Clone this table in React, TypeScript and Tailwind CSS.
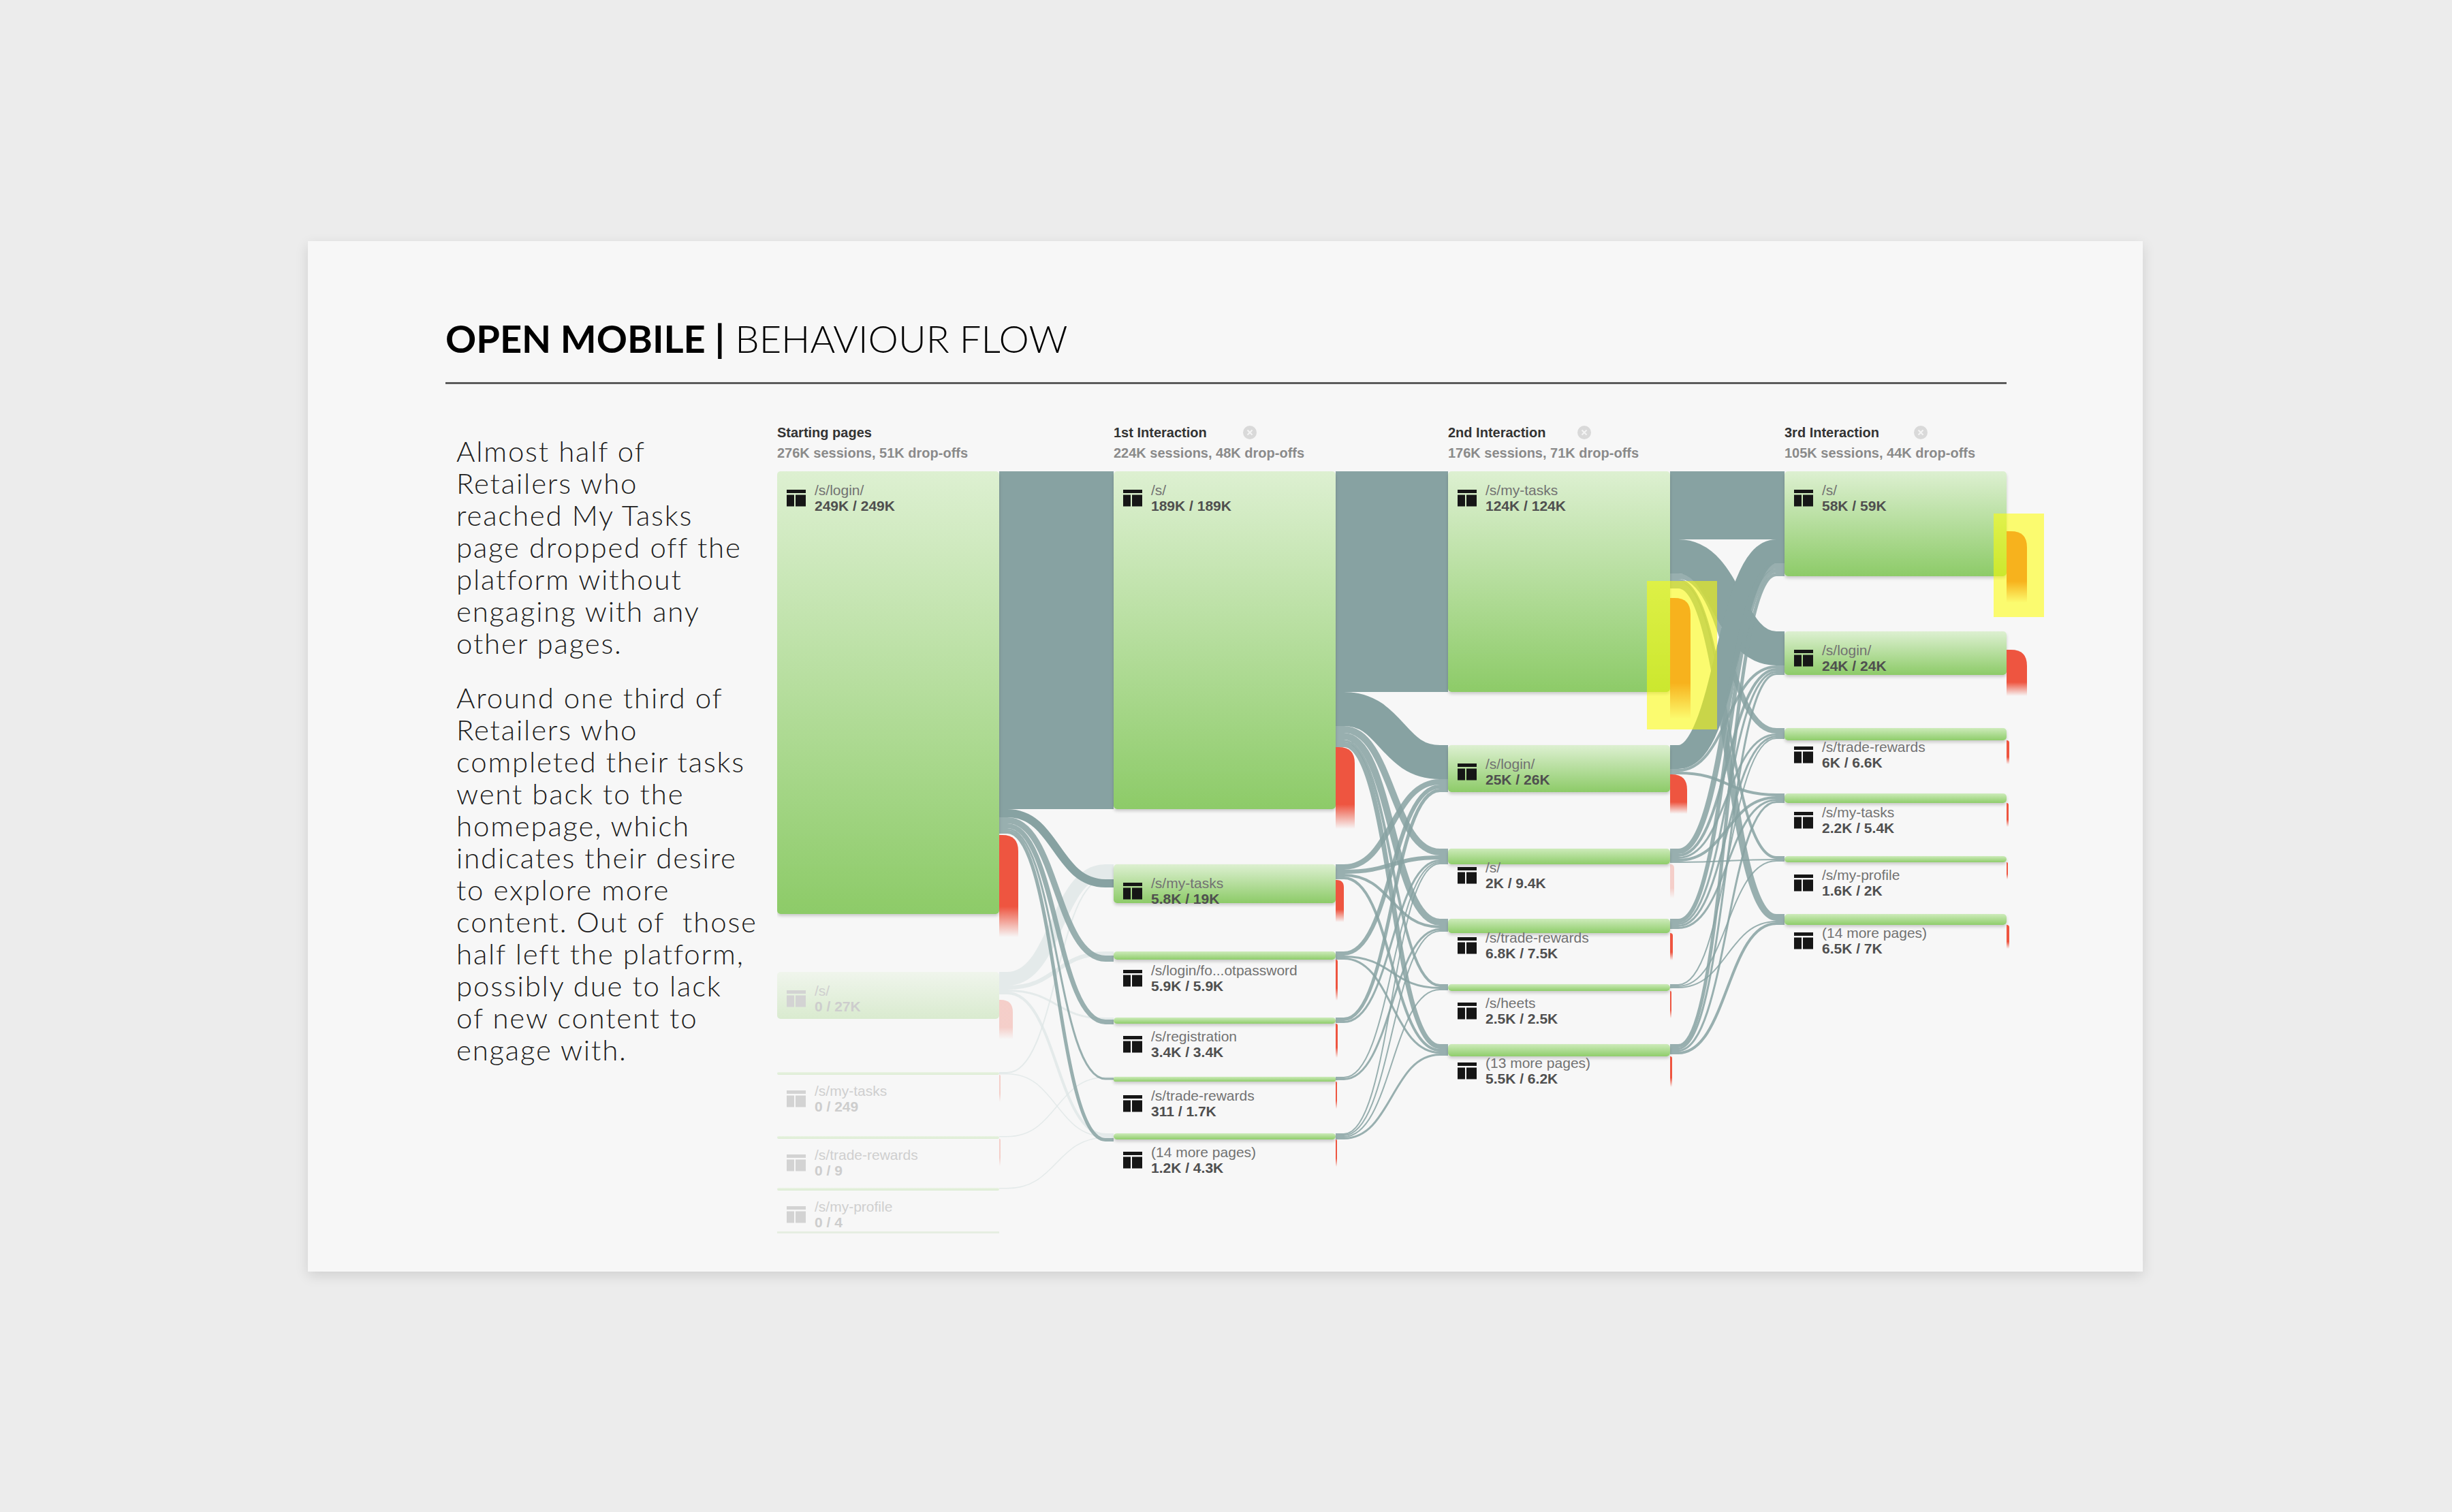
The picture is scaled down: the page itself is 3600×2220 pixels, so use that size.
import React from "react";

type FlowNode = {
  id: string;
  col: number;
  y: number;
  h: number;
  name: string;
  value: string;
  faded?: boolean;
};
type FlowLink = { s: string; t: string; w: number; faded?: boolean };
type Drop = { id: string; y: number; h: number; w: number; faded?: boolean };

const COLX = [0, 494, 985, 1479];
const NW = 326;

const nodes: FlowNode[] = [
  { id: "a0", col: 0, y: 0, h: 650, name: "/s/login/", value: "249K / 249K" },
  { id: "a1", col: 0, y: 735, h: 69, name: "/s/", value: "0 / 27K", faded: true },
  { id: "a2", col: 0, y: 882, h: 4, name: "/s/my-tasks", value: "0 / 249", faded: true },
  { id: "a3", col: 0, y: 976, h: 4, name: "/s/trade-rewards", value: "0 / 9", faded: true },
  { id: "a4", col: 0, y: 1052, h: 4, name: "/s/my-profile", value: "0 / 4", faded: true },

  { id: "b0", col: 1, y: 0, h: 496, name: "/s/", value: "189K / 189K" },
  { id: "b1", col: 1, y: 577, h: 57, name: "/s/my-tasks", value: "5.8K / 19K" },
  { id: "b2", col: 1, y: 705, h: 12, name: "/s/login/fo...otpassword", value: "5.9K / 5.9K" },
  { id: "b3", col: 1, y: 802, h: 9, name: "/s/registration", value: "3.4K / 3.4K" },
  { id: "b4", col: 1, y: 889, h: 7, name: "/s/trade-rewards", value: "311 / 1.7K" },
  { id: "b5", col: 1, y: 972, h: 9, name: "(14 more pages)", value: "1.2K / 4.3K" },

  { id: "c0", col: 2, y: 0, h: 324, name: "/s/my-tasks", value: "124K / 124K" },
  { id: "c1", col: 2, y: 402, h: 69, name: "/s/login/", value: "25K / 26K" },
  { id: "c2", col: 2, y: 554, h: 23, name: "/s/", value: "2K / 9.4K" },
  { id: "c3", col: 2, y: 657, h: 21, name: "/s/trade-rewards", value: "6.8K / 7.5K" },
  { id: "c4", col: 2, y: 753, h: 10, name: "/s/heets", value: "2.5K / 2.5K" },
  { id: "c5", col: 2, y: 841, h: 18, name: "(13 more pages)", value: "5.5K / 6.2K" },

  { id: "d0", col: 3, y: 0, h: 154, name: "/s/", value: "58K / 59K" },
  { id: "d1", col: 3, y: 235, h: 64, name: "/s/login/", value: "24K / 24K" },
  { id: "d2", col: 3, y: 377, h: 18, name: "/s/trade-rewards", value: "6K / 6.6K" },
  { id: "d3", col: 3, y: 473, h: 14, name: "/s/my-tasks", value: "2.2K / 5.4K" },
  { id: "d4", col: 3, y: 565, h: 9, name: "/s/my-profile", value: "1.6K / 2K" },
  { id: "d5", col: 3, y: 650, h: 16, name: "(14 more pages)", value: "6.5K / 7K" },
];

// order matters: offsets stack per source and per target in list order
const links: FlowLink[] = [
  { s: "a1", t: "b1", w: 20, faded: true },
  { s: "a1", t: "b2", w: 6, faded: true },
  { s: "a1", t: "b3", w: 3, faded: true },
  { s: "a1", t: "b5", w: 4, faded: true },
  { s: "a2", t: "b1", w: 2, faded: true },
  { s: "a2", t: "b5", w: 1.5, faded: true },
  { s: "a3", t: "b4", w: 1.5, faded: true },
  { s: "a4", t: "b5", w: 1.5, faded: true },

  { s: "a0", t: "b0", w: 496 },
  { s: "a0", t: "b1", w: 12 },
  { s: "a0", t: "b2", w: 9 },
  { s: "a0", t: "b3", w: 7 },
  { s: "a0", t: "b4", w: 3 },
  { s: "a0", t: "b5", w: 5 },

  { s: "b0", t: "c0", w: 324 },
  { s: "b0", t: "c1", w: 50 },
  { s: "b0", t: "c2", w: 10 },
  { s: "b0", t: "c3", w: 10 },
  { s: "b0", t: "c4", w: 4 },
  { s: "b0", t: "c5", w: 7 },
  { s: "b1", t: "c1", w: 8 },
  { s: "b1", t: "c2", w: 6 },
  { s: "b1", t: "c3", w: 4 },
  { s: "b1", t: "c5", w: 4 },
  { s: "b2", t: "c1", w: 6 },
  { s: "b2", t: "c4", w: 3 },
  { s: "b2", t: "c5", w: 3 },
  { s: "b3", t: "c1", w: 5 },
  { s: "b3", t: "c2", w: 3 },
  { s: "b4", t: "c2", w: 2 },
  { s: "b4", t: "c3", w: 3 },
  { s: "b5", t: "c2", w: 2 },
  { s: "b5", t: "c3", w: 2 },
  { s: "b5", t: "c4", w: 2 },
  { s: "b5", t: "c5", w: 3 },

  { s: "c0", t: "d0", w: 100 },
  { s: "c0", t: "d1", w: 50 },
  { s: "c0", t: "d2", w: 8 },
  { s: "c0", t: "d4", w: 4 },
  { s: "c0", t: "d5", w: 10 },
  { s: "c1", t: "d0", w: 35 },
  { s: "c1", t: "d1", w: 4 },
  { s: "c1", t: "d3", w: 4 },
  { s: "c2", t: "d0", w: 8 },
  { s: "c2", t: "d1", w: 4 },
  { s: "c2", t: "d2", w: 3 },
  { s: "c2", t: "d3", w: 4 },
  { s: "c2", t: "d4", w: 2 },
  { s: "c3", t: "d0", w: 6 },
  { s: "c3", t: "d1", w: 3 },
  { s: "c3", t: "d2", w: 3 },
  { s: "c3", t: "d3", w: 3 },
  { s: "c4", t: "d2", w: 2 },
  { s: "c4", t: "d4", w: 2 },
  { s: "c4", t: "d5", w: 2 },
  { s: "c5", t: "d0", w: 5 },
  { s: "c5", t: "d1", w: 3 },
  { s: "c5", t: "d3", w: 3 },
  { s: "c5", t: "d5", w: 4 },
];

const drops: Drop[] = [
  { id: "a0", y: 534, h: 150, w: 28 },
  { id: "a1", y: 776, h: 58, w: 20, faded: true },
  { id: "a2", y: 886, h: 40, w: 2, faded: true },
  { id: "a3", y: 980, h: 40, w: 2, faded: true },
  { id: "b0", y: 405, h: 120, w: 28 },
  { id: "b1", y: 600, h: 62, w: 12 },
  { id: "b2", y: 717, h: 60, w: 3 },
  { id: "b3", y: 811, h: 50, w: 3 },
  { id: "b4", y: 896, h: 40, w: 2 },
  { id: "b5", y: 981, h: 40, w: 2 },
  { id: "c0", y: 186, h: 178, w: 30 },
  { id: "c1", y: 445, h: 58, w: 25 },
  { id: "c2", y: 577, h: 50, w: 6, faded: true },
  { id: "c3", y: 678, h: 40, w: 4 },
  { id: "c4", y: 763, h: 40, w: 2 },
  { id: "c5", y: 859, h: 45, w: 3 },
  { id: "d0", y: 88, h: 105, w: 30 },
  { id: "d1", y: 262, h: 68, w: 30 },
  { id: "d2", y: 395, h: 35, w: 4 },
  { id: "d3", y: 487, h: 35, w: 3 },
  { id: "d4", y: 574, h: 25, w: 2 },
  { id: "d5", y: 666, h: 35, w: 4 },
];

const highlights = [
  { x: 1277, y: 161, w: 103, h: 218 },
  { x: 1786, y: 62, w: 74, h: 152 },
];

const headers = [
  { title: "Starting pages", sub: "276K sessions, 51K drop-offs", close: false, cls: "w-[494px]" },
  { title: "1st Interaction", sub: "224K sessions, 48K drop-offs", close: true, cls: "w-[491px]" },
  { title: "2nd Interaction", sub: "176K sessions, 71K drop-offs", close: true, cls: "w-[494px]" },
  { title: "3rd Interaction", sub: "105K sessions, 44K drop-offs", close: true, cls: "w-[420px]" },
];

const para1 = [
  "Almost half of",
  "Retailers who",
  "reached My Tasks",
  "page dropped off the",
  "platform without",
  "engaging with any",
  "other pages.",
];
const para2 = [
  "Around one third of",
  "Retailers who",
  "completed their tasks",
  "went back to the",
  "homepage, which",
  "indicates their desire",
  "to explore more",
  "content. Out of  those",
  "half left the platform,",
  "possibly due to lack",
  "of new content to",
  "engage with.",
];

const byId: Record<string, FlowNode> = Object.fromEntries(nodes.map((n) => [n.id, n]));

function placeLinks() {
  const outOff: Record<string, number> = {};
  const inOff: Record<string, number> = {};
  return links.map((l, i) => {
    const s = byId[l.s];
    const t = byId[l.t];
    const so = outOff[l.s] ?? 0;
    const to = inOff[l.t] ?? 0;
    outOff[l.s] = so + l.w;
    inOff[l.t] = to + l.w;
    const x0 = COLX[s.col] + NW;
    const x1 = COLX[t.col];
    const y0 = s.y + so + l.w / 2;
    const y1 = t.y + to + l.w / 2;
    const a = x0 + 12;
    const b = x1 - 12;
    const m = (a + b) / 2;
    const d = `M${x0},${y0} L${a},${y0} C${m},${y0} ${m},${y1} ${b},${y1} L${x1},${y1}`;
    return { key: i, d, w: Math.max(l.w, 1.5), faded: l.faded };
  });
}

function PageIcon({ x, y, color }: { x: number; y: number; color: string }) {
  return (
    <g transform={`translate(${x},${y})`} fill={color}>
      <rect x={0} y={0} width={28} height={5} />
      <rect x={0} y={7.5} width={11} height={17} />
      <rect x={13} y={7.5} width={15} height={17} />
    </g>
  );
}

function CloseDot() {
  return (
    <svg width="20" height="20" viewBox="0 0 20 20" className="block">
      <circle cx="10" cy="10" r="10" fill="#d9d9d9" />
      <path d="M6.5 6.5 L13.5 13.5 M13.5 6.5 L6.5 13.5" stroke="#f4f4f4" strokeWidth="2" />
    </svg>
  );
}

function FlowChart() {
  const placed = placeLinks();
  return (
    <svg width="1920" height="1150" viewBox="0 0 1920 1150" className="block">
      <defs>
        <linearGradient id="nodeGrad" x1="0" y1="0" x2="0" y2="1">
          <stop offset="0" stopColor="#ddf0d1" />
          <stop offset="1" stopColor="#8dcb68" />
        </linearGradient>
        <linearGradient id="thinGrad" x1="0" y1="0" x2="0" y2="1">
          <stop offset="0" stopColor="#cdebba" />
          <stop offset="1" stopColor="#8fcd6b" />
        </linearGradient>
        <linearGradient id="dropGrad" x1="0" y1="0" x2="0" y2="1">
          <stop offset="0" stopColor="#ee5540" stopOpacity="1" />
          <stop offset="0.7" stopColor="#ee5540" stopOpacity="1" />
          <stop offset="1" stopColor="#ee5540" stopOpacity="0" />
        </linearGradient>
        <filter id="nodeShadow" filterUnits="userSpaceOnUse" x="-50" y="-50" width="2050" height="1250">
          <feDropShadow dx="0" dy="3" stdDeviation="2" floodColor="#000" floodOpacity="0.18" />
        </filter>
      </defs>

      {/* links */}
      {placed.map((p) => (
        <path
          key={p.key}
          d={p.d}
          fill="none"
          stroke={p.faded ? "#dde6e6" : "#87a2a2"}
          strokeOpacity={p.faded ? 0.75 : p.w < 12 ? 0.85 : 1}
          strokeWidth={p.w}
        />
      ))}

      {/* faint row separator under the faded start pages */}
      <rect x={0} y={1116} width={NW} height={3} fill="#e6eee2" />

      {/* nodes */}
      {nodes.map((n) => {
        const x = COLX[n.col];
        const txt = n.faded ? "#cfcfcf" : "#727272";
        const val = n.faded ? "#cdcdcd" : "#4f4f4f";
        return (
          <g key={n.id}>
            <rect
              x={x}
              y={n.y}
              width={NW}
              height={n.h}
              rx={n.h > 8 ? 5 : 2}
              fill={n.h > 40 ? "url(#nodeGrad)" : "url(#thinGrad)"}
              filter={n.faded ? undefined : "url(#nodeShadow)"}
              opacity={n.faded ? 0.28 : 1}
            />
            <PageIcon x={x + 14} y={n.y + 27} color={n.faded ? "#d3d3d3" : "#161616"} />
            <text x={x + 55} y={n.y + 35} fontSize={21} fill={txt}>
              {n.name}
            </text>
            <text x={x + 55} y={n.y + 58} fontSize={21} fontWeight={700} fill={val}>
              {n.value}
            </text>
          </g>
        );
      })}

      {/* drop-offs */}
      {drops.map((dr) => {
        const n = byId[dr.id];
        const x = COLX[n.col] + NW;
        const r = Math.min(dr.w, 26) * 0.9;
        const d = `M${x},${dr.y} H${x + dr.w - r} Q${x + dr.w},${dr.y} ${x + dr.w},${dr.y + r} V${dr.y + dr.h} H${x} Z`;
        return <path key={dr.id} d={d} fill="url(#dropGrad)" opacity={dr.faded ? 0.25 : 1} />;
      })}

      {/* highlight boxes */}
      {highlights.map((h, i) => (
        <rect key={i} x={h.x} y={h.y} width={h.w} height={h.h} fill="#ffff00" opacity={0.55} />
      ))}
    </svg>
  );
}

export default function App() {
  return (
    <div className="w-[3600px] h-[2220px] bg-[#ececec] pt-[354px] pl-[452px]">
      <div className="w-[2694px] h-[1513px] bg-[#f7f7f7] shadow-[0_6px_18px_rgba(0,0,0,0.12)] pl-[202px] pt-[115px]">
        <h1 className="font-['Lato',sans-serif] text-[56px] leading-[56px] text-black whitespace-nowrap">
          <span className="font-bold">OPEN MOBILE |</span>
          <span className="font-light"> BEHAVIOUR FLOW</span>
        </h1>
        <div className="mt-[36px] w-[2292px] h-[3px] bg-[#5c5c5c]" />

        <div className="flex items-start mt-[56px]">
          <div className="w-[487px] shrink-0 pl-[16px] pt-[19px] font-['Lato',sans-serif] font-light text-[42px] leading-[47px] tracking-[1.8px] text-[#1c1c1c]">
            <p>
              {para1.map((l, i) => (
                <span key={i} className="block whitespace-pre">
                  {l}
                </span>
              ))}
            </p>
            <p className="mt-[33px]">
              {para2.map((l, i) => (
                <span key={i} className="block whitespace-pre">
                  {l}
                </span>
              ))}
            </p>
          </div>

          <div className="font-['Liberation_Sans',Arial,sans-serif]">
            <div className="flex">
              {headers.map((h) => (
                <div key={h.title} className={h.cls}>
                  <div className="flex items-center h-[30px]">
                    <span className="w-[190px] text-[20px] font-bold text-[#333333]">{h.title}</span>
                    {h.close && <CloseDot />}
                  </div>
                  <div className="h-[30px] leading-[30px] text-[20px] font-bold text-[#8a8a8a]">{h.sub}</div>
                </div>
              ))}
            </div>
            <div className="mt-[12px]">
              <FlowChart />
            </div>
          </div>
        </div>
      </div>
    </div>
  );
}
